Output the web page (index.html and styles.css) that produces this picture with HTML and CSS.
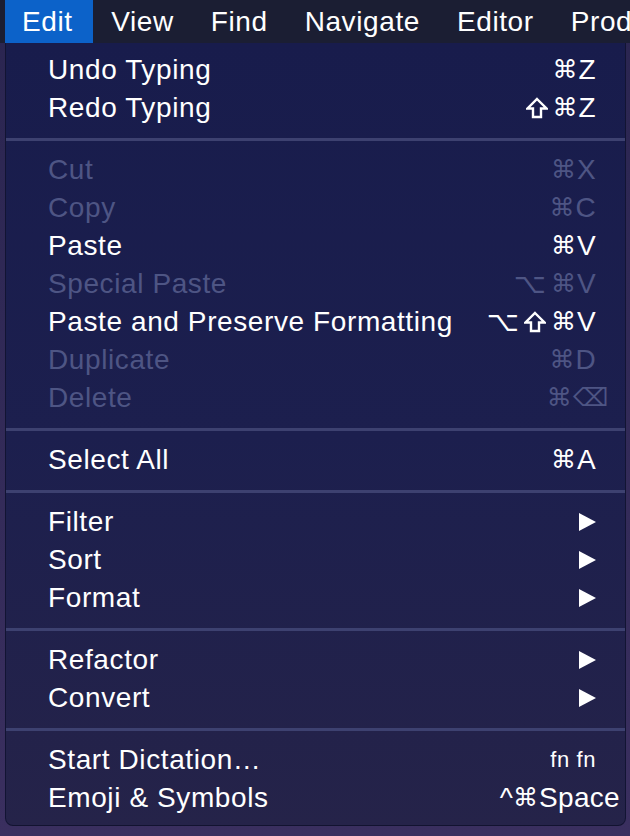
FILE: index.html
```html
<!DOCTYPE html>
<html>
<head>
<meta charset="utf-8">
<link rel="stylesheet" href="styles.css">
</head>
<body>
<div class="menubar">
  <span class="mb-item active">Edit</span>
  <span class="mb-item">View</span>
  <span class="mb-item">Find</span>
  <span class="mb-item">Navigate</span>
  <span class="mb-item">Editor</span>
  <span class="mb-item">Product</span>
</div>
<div class="menu">
  <div class="row"><span>Undo Typing</span><span class="sc"><span class="sym">⌘</span>Z</span></div>
  <div class="row"><span>Redo Typing</span><span class="sc"><svg class="shift" viewBox="0 0 22 22"><path d="M11 2 L20.5 11.5 L15 11.5 L15 20 L7 20 L7 11.5 L1.5 11.5 Z"/></svg><span class="sym">⌘</span>Z</span></div>
  <div class="sep"></div>
  <div class="row dis"><span>Cut</span><span class="sc"><span class="sym">⌘</span>X</span></div>
  <div class="row dis"><span>Copy</span><span class="sc"><span class="sym">⌘</span>C</span></div>
  <div class="row"><span>Paste</span><span class="sc"><span class="sym">⌘</span>V</span></div>
  <div class="row dis"><span>Special Paste</span><span class="sc"><span class="sym opt">⌥</span><span class="sym">⌘</span>V</span></div>
  <div class="row"><span>Paste and Preserve Formatting</span><span class="sc"><span class="sym opt">⌥</span><svg class="shift" viewBox="0 0 22 22"><path d="M11 2 L20.5 11.5 L15 11.5 L15 20 L7 20 L7 11.5 L1.5 11.5 Z"/></svg><span class="sym">⌘</span>V</span></div>
  <div class="row dis"><span>Duplicate</span><span class="sc"><span class="sym">⌘</span>D</span></div>
  <div class="row dis"><span>Delete</span><span class="sc sc-del"><span class="sym">⌘⌫</span></span></div>
  <div class="sep"></div>
  <div class="row"><span>Select All</span><span class="sc"><span class="sym">⌘</span>A</span></div>
  <div class="sep"></div>
  <div class="row"><span>Filter</span><span class="arrow"></span></div>
  <div class="row"><span>Sort</span><span class="arrow"></span></div>
  <div class="row"><span>Format</span><span class="arrow"></span></div>
  <div class="sep"></div>
  <div class="row"><span>Refactor</span><span class="arrow"></span></div>
  <div class="row"><span>Convert</span><span class="arrow"></span></div>
  <div class="sep"></div>
  <div class="row"><span>Start Dictation…</span><span class="sc sc-fn">fn fn</span></div>
  <div class="row"><span>Emoji &amp; Symbols</span><span class="sc sc-emoji">^<span class="sym">⌘</span>Space</span></div>
</div>
</body>
</html>
```

FILE: styles.css
```css
html, body {
  margin: 0;
  padding: 0;
}
body {
  width: 630px;
  height: 836px;
  overflow: hidden;
  background: linear-gradient(180deg, #2a2550 0%, #3a2f5f 100%);
  font-family: "Liberation Sans", "DejaVu Sans", sans-serif;
  color: #ffffff;
  font-size: 28px;
  letter-spacing: 0.6px;
}
.menubar {
  height: 43px;
  background: #1b1e33;
  display: flex;
  align-items: stretch;
  padding-left: 5px;
  white-space: nowrap;
  overflow: hidden;
}
.mb-item {
  display: flex;
  align-items: center;
  padding: 0 18.5px;
  line-height: 43px;
}
.mb-item.active {
  background: #0c62c9;
  padding: 0 20px 0 17px;
}
.menu {
  margin-left: 5px;
  width: 619px;
  padding: 8px 0 8px;
  background: linear-gradient(180deg, #181c4c 0%, #1c1f4e 50%, #252349 100%);
  border-left: 1px solid #121433;
  border-right: 1px solid #121433;
  border-bottom: 1px solid #121330;
  border-radius: 0 0 8px 8px;
}
.row {
  height: 38px;
  line-height: 38px;
  padding: 0 29px 0 42px;
  display: flex;
  justify-content: space-between;
  align-items: center;
  white-space: nowrap;
}
.row.dis {
  color: #4e5584;
}
.sep {
  height: 3px;
  margin: 11px 0 10px;
  background: #3d4170;
}
.sc {
  display: flex;
  align-items: center;
  letter-spacing: 0.3px;
}
.sym {
  font-family: "DejaVu Sans", sans-serif;
  font-size: 25px;
  letter-spacing: 1px;
}
.sym.opt {
  font-size: 28px;
  margin-right: 4px;
}
.shift {
  width: 22px;
  height: 22px;
  margin-right: 5px;
  fill: none;
  stroke: currentColor;
  stroke-width: 2.4;
  stroke-linejoin: miter;
}
.sc-del {
  margin-right: -13px;
}
.sc-fn {
  font-size: 22px;
  letter-spacing: 0.6px;
}
.sc-emoji {
  margin-right: -24px;
}
.arrow {
  width: 0;
  height: 0;
  border-top: 9.5px solid transparent;
  border-bottom: 9.5px solid transparent;
  border-left: 17px solid #ffffff;
}
```
